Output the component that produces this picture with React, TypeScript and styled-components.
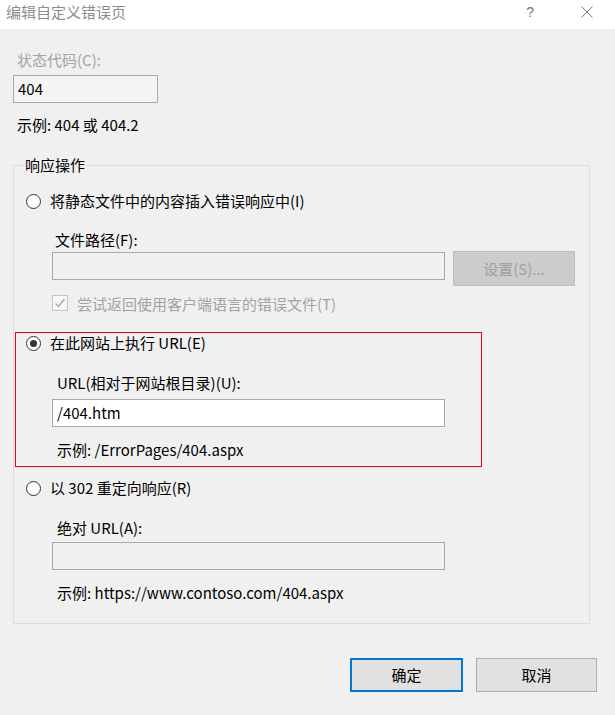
import React from "react";
import styled, { createGlobalStyle } from "styled-components";

const Global = createGlobalStyle`
  html, body { margin: 0; padding: 0; }
  body {
    background: #f0f0f0;
    font-family: "Noto Sans CJK SC", "Noto Sans", sans-serif;
    font-size: 15px;
    color: #000;
  }
  #root { width: 615px; height: 715px; overflow: hidden; }
`;

const Window = styled.div`
  width: 615px;
  height: 715px;
  background: #f0f0f0;
  display: flex;
  flex-direction: column;
`;

const TitleBar = styled.div`
  height: 29px;
  background: #fff;
  display: flex;
  align-items: center;
  padding-left: 6px;
  box-sizing: border-box;
`;

const TitleText = styled.div`
  flex: 1;
  color: #8c8c8c;
  font-size: 15px;
  line-height: 20px;
  margin-top: -6px;
`;

const TitleIcons = styled.div`
  display: flex;
  align-items: center;
  gap: 47px;
  margin-right: 22px;
  margin-top: -5px;
`;

const Help = styled.span`
  color: #777;
  font-size: 14px;
  line-height: 16px;
  font-family: "Liberation Sans", sans-serif;
`;

const Body = styled.div`
  display: flex;
  flex-direction: column;
  padding: 0 0 0 13px;
`;

const Text = styled.div<{ $mt?: number; $pl?: number; $disabled?: boolean }>`
  line-height: 20px;
  height: 20px;
  white-space: nowrap;
  margin-top: ${(p) => p.$mt ?? 0}px;
  padding-left: ${(p) => p.$pl ?? 0}px;
  color: ${(p) => (p.$disabled ? "#a3a3a3" : "#000")};
`;

const Input = styled.div<{ $w: number; $bg: string; $mt?: number; $ml?: number }>`
  box-sizing: border-box;
  width: ${(p) => p.$w}px;
  height: 28px;
  margin-top: ${(p) => p.$mt ?? 0}px;
  margin-left: ${(p) => p.$ml ?? 0}px;
  background: ${(p) => p.$bg};
  border: 1px solid #a9a9a9;
  padding-left: 4px;
  display: flex;
  align-items: center;
  line-height: 20px;
  white-space: nowrap;
`;

const Group = styled.fieldset`
  margin: 20px 0 0 0;
  padding: 0 0 20px 0;
  border: 1px solid #dcdcdc;
  width: 577px;
  box-sizing: border-box;
  min-width: 0;
`;

const Legend = styled.legend`
  margin-left: 9px;
  padding: 0 2px;
  line-height: 20px;
  font-size: 15px;
`;

const RadioRow = styled.div<{ $mt: number; $pl: number }>`
  display: flex;
  align-items: center;
  gap: 9px;
  margin-top: ${(p) => p.$mt}px;
  padding-left: ${(p) => p.$pl}px;
  height: 20px;
  line-height: 20px;
  white-space: nowrap;
`;

const RadioCircle = styled.span<{ $checked?: boolean }>`
  box-sizing: border-box;
  width: 15px;
  height: 15px;
  border-radius: 50%;
  border: 1px solid #333;
  background: #fff;
  display: flex;
  align-items: center;
  justify-content: center;
  flex: none;
  &::after {
    content: "";
    display: ${(p) => (p.$checked ? "block" : "none")};
    width: 7px;
    height: 7px;
    border-radius: 50%;
    background: #333;
  }
`;

const Indent = styled.div<{ $pl: number }>`
  display: flex;
  flex-direction: column;
  padding-left: ${(p) => p.$pl}px;
`;

const FileRow = styled.div`
  display: flex;
  align-items: flex-start;
  gap: 8px;
  margin-top: 1px;
`;

const SetButton = styled.div`
  box-sizing: border-box;
  width: 122px;
  height: 35px;
  background: #cccccc;
  border: 1px solid #bfbfbf;
  color: #a0a0a0;
  display: flex;
  align-items: center;
  justify-content: center;
  line-height: 20px;
`;

const CheckRow = styled.div`
  display: flex;
  align-items: center;
  gap: 9px;
  margin-top: 7px;
  height: 20px;
  color: #a3a3a3;
  white-space: nowrap;
`;

const CheckBox = styled.span`
  box-sizing: border-box;
  width: 16px;
  height: 16px;
  border: 1px solid #c4c4c4;
  background: #f7f7f7;
  display: flex;
  align-items: center;
  justify-content: center;
  flex: none;
`;

const Highlight = styled.div`
  margin: 19px 0 0 1px;
  width: 467px;
  box-sizing: border-box;
  border: 1px solid #ff0000;
  padding: 0 0 6px 0;
  display: flex;
  flex-direction: column;
`;

const Footer = styled.div`
  display: flex;
  justify-content: flex-end;
  gap: 13px;
  margin-top: 34px;
  padding-right: 18px;
`;

const Button = styled.div<{ $w: number; $primary?: boolean }>`
  box-sizing: border-box;
  width: ${(p) => p.$w}px;
  height: 34px;
  background: #e1e1e1;
  border: ${(p) => (p.$primary ? "2px solid #0078d7" : "1px solid #adadad")};
  display: flex;
  align-items: center;
  justify-content: center;
  line-height: 20px;
`;

export default function App() {
  return (
    <>
      <Global />
      <Window>
        <TitleBar>
          <TitleText>编辑自定义错误页</TitleText>
          <TitleIcons>
            <Help>?</Help>
            <svg width="12" height="12" viewBox="0 0 12 12">
              <path d="M0.5 0.5 L11.5 11.5 M11.5 0.5 L0.5 11.5" stroke="#777" strokeWidth="1" fill="none" />
            </svg>
          </TitleIcons>
        </TitleBar>
        <Body>
          <Text $mt={21} $pl={4} $disabled>状态代码(C):</Text>
          <Input $w={145} $bg="#f4f4f4" $mt={5}>404</Input>
          <Text $mt={12} $pl={4}>示例: 404 或 404.2</Text>
          <Group>
            <Legend>响应操作</Legend>
            <RadioRow $mt={16} $pl={12}>
              <RadioCircle />
              <span>将静态文件中的内容插入错误响应中(I)</span>
            </RadioRow>
            <Indent $pl={38}>
              <Text $mt={19} $pl={3}>文件路径(F):</Text>
              <FileRow>
                <Input $w={393} $bg="#f0f0f0" $mt={1} />
                <SetButton>设置(S)...</SetButton>
              </FileRow>
              <CheckRow>
                <CheckBox>
                  <svg width="12" height="12" viewBox="0 0 12 12">
                    <path d="M1.5 6.5 L4.5 9.5 L10.5 2" stroke="#a8a8a8" strokeWidth="1.4" fill="none" />
                  </svg>
                </CheckBox>
                <span>尝试返回使用客户端语言的错误文件(T)</span>
              </CheckRow>
            </Indent>
            <Highlight>
              <RadioRow $mt={0} $pl={10}>
                <RadioCircle $checked />
                <span>在此网站上执行 URL(E)</span>
              </RadioRow>
              <Indent $pl={36}>
                <Text $mt={20} $pl={5}>URL(相对于网站根目录)(U):</Text>
                <Input $w={393} $bg="#ffffff" $mt={6}>/404.htm</Input>
                <Text $mt={13} $pl={5}>示例: /ErrorPages/404.aspx</Text>
              </Indent>
            </Highlight>
            <RadioRow $mt={11} $pl={12}>
              <RadioCircle />
              <span>以 302 重定向响应(R)</span>
            </RadioRow>
            <Indent $pl={38}>
              <Text $mt={20} $pl={5}>绝对 URL(A):</Text>
              <Input $w={393} $bg="#f0f0f0" $mt={4} />
              <Text $mt={13} $pl={5}>示例: https://www.contoso.com/404.aspx</Text>
            </Indent>
          </Group>
          <Footer>
            <Button $w={113} $primary>确定</Button>
            <Button $w={121}>取消</Button>
          </Footer>
        </Body>
      </Window>
    </>
  );
}
